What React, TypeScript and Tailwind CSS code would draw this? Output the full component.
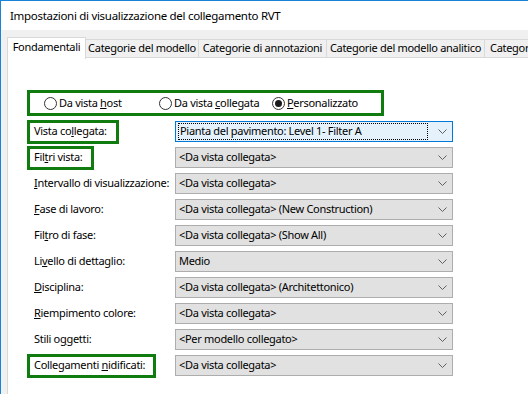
import React from "react";

const font = "font-['Noto_Sans',sans-serif] text-[11px] tracking-[-0.3px]";

function Chevron() {
  return (
    <svg width="9" height="6" viewBox="0 0 9 6" className="shrink-0">
      <polyline points="0.5,0.5 4.5,4.5 8.5,0.5" fill="none" stroke="#606060" strokeWidth="1" />
    </svg>
  );
}

function Radio({ checked, children, w }: { checked?: boolean; children: React.ReactNode; w: string }) {
  return (
    <div className={`flex items-center gap-[2px] ${w}`}>
      <span className="w-[13px] h-[13px] shrink-0 rounded-full border border-[#333] bg-white flex items-center justify-center">
        {checked && <span className="w-[7px] h-[7px] rounded-full bg-[#1a1a1a]" />}
      </span>
      <span>{children}</span>
    </div>
  );
}

function Dropdown({ value, focused }: { value: string; focused?: boolean }) {
  if (focused) {
    return (
      <div className="w-[278px] h-[21px] shrink-0 border border-[#0078d7] bg-[#e5f1fb] flex items-center pl-[2px] pr-[5px]">
        <div className="flex-1 h-[17px] border border-dotted border-black flex items-center pl-[1px] mr-[10px]">
          {value}
        </div>
        <Chevron />
      </div>
    );
  }
  return (
    <div className="w-[278px] h-[21px] shrink-0 border border-[#adadad] bg-[#e1e1e1] flex items-center justify-between pl-[3px] pr-[5px]">
      <span>{value}</span>
      <Chevron />
    </div>
  );
}

type Row = { label: React.ReactNode; value: string; box?: string; focused?: boolean };

const rows: Row[] = [
  { label: <>Vista co<u>l</u>legata:</>, value: "Pianta del pavimento: Level 1- Filter A", box: "w-[86px]", focused: true },
  { label: <>Fil<u>t</u>ri vista:</>, value: "<Da vista collegata>", box: "w-[61px]" },
  { label: <><u>I</u>ntervallo di visualizzazione:</>, value: "<Da vista collegata>" },
  { label: <><u>F</u>ase di lavoro:</>, value: "<Da vista collegata> (New Construction)" },
  { label: <>Fil<u>t</u>ro di fase:</>, value: "<Da vista collegata> (Show All)" },
  { label: <>Li<u>v</u>ello di dettaglio:</>, value: "Medio" },
  { label: <><u>D</u>isciplina:</>, value: "<Da vista collegata> (Architettonico)" },
  { label: <><u>R</u>iempimento colore:</>, value: "<Da vista collegata>" },
  { label: <>Stili o<u>g</u>getti:</>, value: "<Per modello collegato>" },
  { label: <>Collegamenti <u>n</u>idificati:</>, value: "<Da vista collegata>", box: "w-[123px]" },
];

const tabs = [
  { name: "Categorie del modello", w: "w-[113px] justify-center" },
  { name: "Categorie di annotazioni", w: "w-[128px] justify-center" },
  { name: "Categorie del modello analitico", w: "w-[158px] justify-center" },
  { name: "Categorie del modello analitico coordinato", w: "w-[80px] justify-start pl-[5px]" },
];

export default function App() {
  return (
    <div className={`w-[528px] h-[394px] overflow-hidden bg-[#f0f0f0] border-l border-t border-[#1883d7] text-black whitespace-nowrap ${font}`}>
      {/* title bar */}
      <div className="h-[29px] bg-white flex items-center pl-[9px] text-[11.5px]">
        Impostazioni di visualizzazione del collegamento RVT
      </div>

      <div className="pt-[7px] pl-[6px]">
        {/* tabs */}
        <div className="flex items-end h-[21px]">
          <div className="w-[79px] h-[22px] shrink-0 bg-white border-l border-t border-r border-[#d9d9d9] flex items-center justify-center relative z-10 -mb-[1px] pb-[2px]">
            Fondamentali
          </div>
          {tabs.map((t) => (
            <div
              key={t.name}
              className={`${t.w} h-[19px] shrink-0 border-t border-r border-b border-[#d9d9d9] flex items-center overflow-hidden`}
            >
              {t.name}
            </div>
          ))}
        </div>

        {/* panel */}
        <div className="bg-white border-l border-[#d9d9d9] h-[340px] pl-[19px] pt-[32px]">
          <div className="w-[357px] h-[26px] border-[3px] border-[#107c10] flex items-center pl-[14px]">
            <Radio w="w-[115px]">Da vista <u>h</u>ost</Radio>
            <Radio w="w-[113px]">Da vista <u>c</u>ollegata</Radio>
            <Radio w="w-[100px]" checked>
              <u>P</u>ersonalizzato
            </Radio>
          </div>

          <div className="flex flex-col gap-[5px] mt-[5px]">
            {rows.map((r, i) => (
              <div key={i} className="flex items-center h-[21px]">
                <div className="w-[148px] shrink-0 pl-[3px]">
                  {r.box ? (
                    <span className={`inline-flex items-center h-[18px] pl-[4px] outline-3 outline-solid outline-[#107c10] ${r.box}`}>
                      <span>{r.label}</span>
                    </span>
                  ) : (
                    <span className="pl-[4px]">{r.label}</span>
                  )}
                </div>
                <Dropdown value={r.value} focused={r.focused} />
              </div>
            ))}
          </div>
        </div>
      </div>
    </div>
  );
}
